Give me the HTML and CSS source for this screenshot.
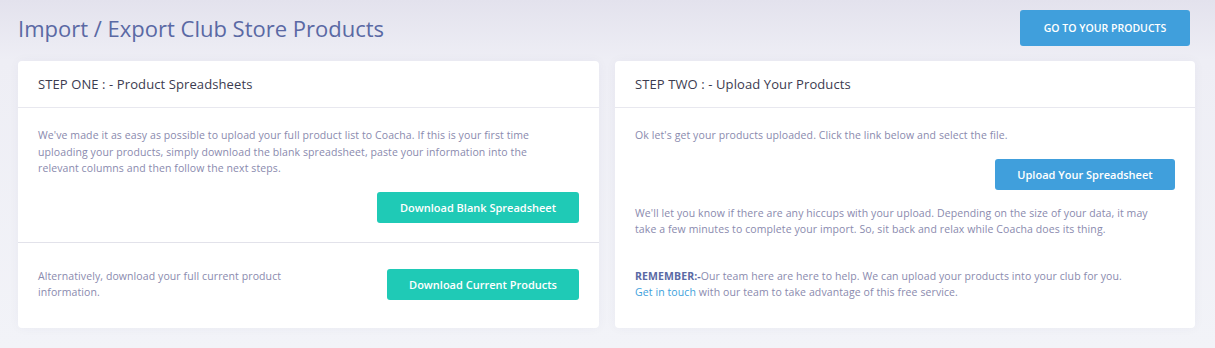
FILE: index.html
```html
<!DOCTYPE html>
<html lang="en">
  <head>
    <meta charset="UTF-8" />
    <meta name="viewport" content="width=device-width, initial-scale=1.0" />
    <title>Import / Export Club Store Products</title>
    <link rel="stylesheet" href="styles.css">
  </head>
  <body>
    <div class="page">
      <div class="page-head">
        <h1 class="page-title">Import / Export Club Store Products</h1>
        <button class="btn btn-blue btn-head">GO TO YOUR PRODUCTS</button>
      </div>

      <div class="cards">
        <div class="card">
          <div class="card-head">STEP ONE : - Product Spreadsheets</div>
          <div class="card-section">
            <p class="text">
              We've made it as easy as possible to upload your full product list to Coacha. If this is your first time<br>
              uploading your products, simply download the blank spreadsheet, paste your information into the<br>
              relevant columns and then follow the next steps.
            </p>
            <div class="btn-row first">
              <button class="btn btn-teal btn-wide">Download Blank Spreadsheet</button>
            </div>
          </div>
          <div class="card-section split">
            <p class="text text-narrow">
              Alternatively, download your full current product<br>information.
            </p>
            <button class="btn btn-teal btn-mid">Download Current Products</button>
          </div>
        </div>

        <div class="card">
          <div class="card-head">STEP TWO : - Upload Your Products</div>
          <div class="card-section last">
            <p class="text">Ok let's get your products uploaded. Click the link below and select the file.</p>
            <div class="btn-row">
              <button class="btn btn-blue btn-upload">Upload Your Spreadsheet</button>
            </div>
            <p class="text">
              We'll let you know if there are any hiccups with your upload. Depending on the size of your data, it may<br>
              take a few minutes to complete your import. So, sit back and relax while Coacha does its thing.
            </p>
            <p class="text remember">
              <b>REMEMBER:-</b>Our team here are here to help. We can upload your products into your club for you.<br>
              <a href="#" class="link">Get in touch</a> with our team to take advantage of this free service.
            </p>
          </div>
        </div>
      </div>
    </div>
  </body>
</html>
```

FILE: styles.css
```css
* {
  box-sizing: border-box;
}
body {
  margin: 0;
  font-family: "Open Sans", "Noto Sans", sans-serif;
  background: linear-gradient(#e3e2ed 0px, #eeeef5 60px, #f2f3f8 348px);
  height: 348px;
}
.page {
  padding: 10px 20px 0 18px;
}
.page-head {
  display: flex;
  justify-content: space-between;
  align-items: center;
  height: 36px;
  margin-bottom: 15px;
}
.page-title {
  margin: 0;
  font-size: 22px;
  font-weight: 400;
  color: #5a69a4;
}
.btn {
  border: none;
  border-radius: 3px;
  color: #fff;
  font-family: inherit;
  font-size: 11px;
  font-weight: 600;
  height: 31px;
  cursor: pointer;
}
.btn-blue {
  background: #409fdc;
}
.btn-teal {
  background: #1fcab6;
}
.btn-head {
  width: 170px;
  height: 36px;
  margin-right: 5px;
  font-size: 10.5px;
}
.btn-wide {
  width: 202px;
}
.btn-mid {
  width: 192px;
}
.btn-upload {
  width: 180px;
}
.cards {
  display: grid;
  grid-template-columns: 581px 580px;
  gap: 16px;
}
.card {
  background: #fff;
  border-radius: 4px;
  box-shadow: 0 0 12px rgba(40, 40, 90, 0.04);
  height: 267px;
}
.card-head {
  height: 47px;
  display: flex;
  align-items: center;
  padding: 0 20px;
  border-bottom: 1px solid #e8e8ef;
  font-size: 13px;
  letter-spacing: 0.1px;
  color: #3b3b50;
}
.card-section {
  padding: 19px 20px 19px 20px;
  border-bottom: 1px solid #e2e2ea;
}
.card-section.split {
  display: flex;
  justify-content: space-between;
  align-items: center;
  border-bottom: none;
  padding: 25px 20px 23px 20px;
}
.card-section.last {
  border-bottom: none;
}
.text {
  margin: 0;
  font-size: 10.5px;
  line-height: 16.5px;
  letter-spacing: 0.1px;
  color: #8a8aae;
}
.text-narrow {
  width: 260px;
}
.btn-row {
  display: flex;
  justify-content: flex-end;
  margin: 15px 0;
}
.btn-row.first {
  margin-bottom: 0;
}
.remember {
  margin-top: 30px;
}
.remember b {
  color: #5a69a4;
  font-weight: 700;
}
.link {
  color: #409fdc;
  text-decoration: none;
}
```
